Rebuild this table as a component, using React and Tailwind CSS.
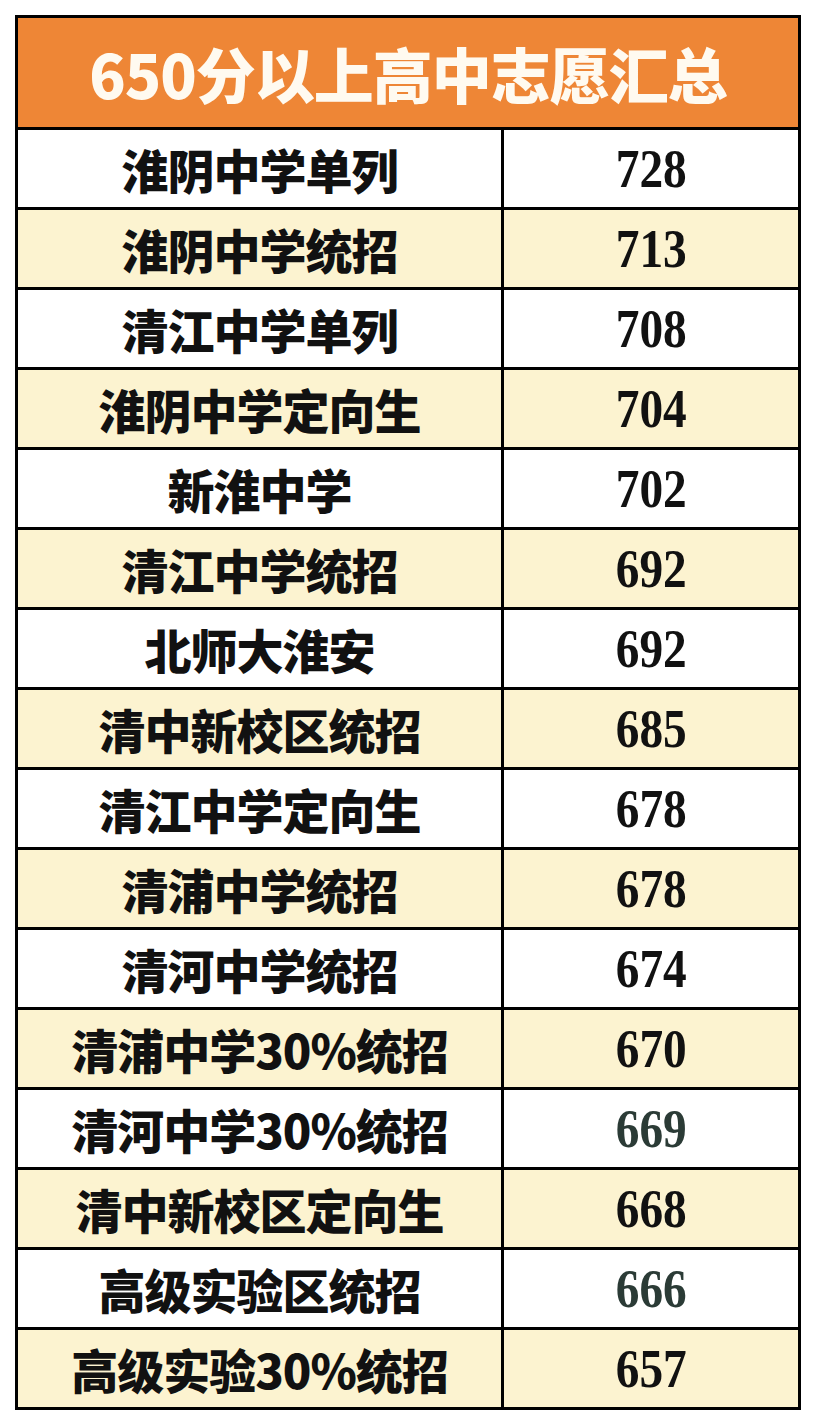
import React from 'react'

const rows = [
    { name: '淮阴中学单列', score: '728' },
    { name: '淮阴中学统招', score: '713' },
    { name: '清江中学单列', score: '708' },
    { name: '淮阴中学定向生', score: '704' },
    { name: '新淮中学', score: '702' },
    { name: '清江中学统招', score: '692' },
    { name: '北师大淮安', score: '692' },
    { name: '清中新校区统招', score: '685' },
    { name: '清江中学定向生', score: '678' },
    { name: '清浦中学统招', score: '678' },
    { name: '清河中学统招', score: '674' },
    { name: '清浦中学30%统招', score: '670' },
    { name: '清河中学30%统招', score: '669', dim: true },
    { name: '清中新校区定向生', score: '668' },
    { name: '高级实验区统招', score: '666', dim: true },
    { name: '高级实验30%统招', score: '657' },
]

const App = () => {
    return (
        <div className="min-h-screen bg-white pt-[15px] pl-[15px]">
            <div className="w-[786px] border-[3px] border-black">

                <div className="h-[109px] bg-[#ee8636] flex items-center justify-center">
                    <h1 className="font-['Noto_Sans_CJK_SC',sans-serif] text-[60px] font-black text-[#fffaf0] tracking-[-1px] leading-none">
                        650分以上高中志愿汇总
                    </h1>
                </div>

                {rows.map((row, i) => (
                    <div
                        key={i}
                        className={`h-[80px] border-t-[3px] border-black grid grid-cols-[483px_1fr] ${i % 2 === 1 ? 'bg-[#fcf3d0]' : 'bg-white'}`}>
                        <div className="flex items-center justify-center font-['Noto_Sans_CJK_SC',sans-serif] text-[47px] font-black text-[#111] leading-none tracking-[-1px]">
                            {row.name}
                        </div>
                        <div className="border-l-[3px] border-black flex items-center justify-center">
                            <span className={`inline-block scale-x-[0.86] font-['Liberation_Serif',serif] text-[55px] font-bold leading-none ${row.dim ? 'text-[#2b3b36]' : 'text-[#111]'}`}>
                                {row.score}
                            </span>
                        </div>
                    </div>
                ))}

            </div>
        </div>
    )
}

export default App
